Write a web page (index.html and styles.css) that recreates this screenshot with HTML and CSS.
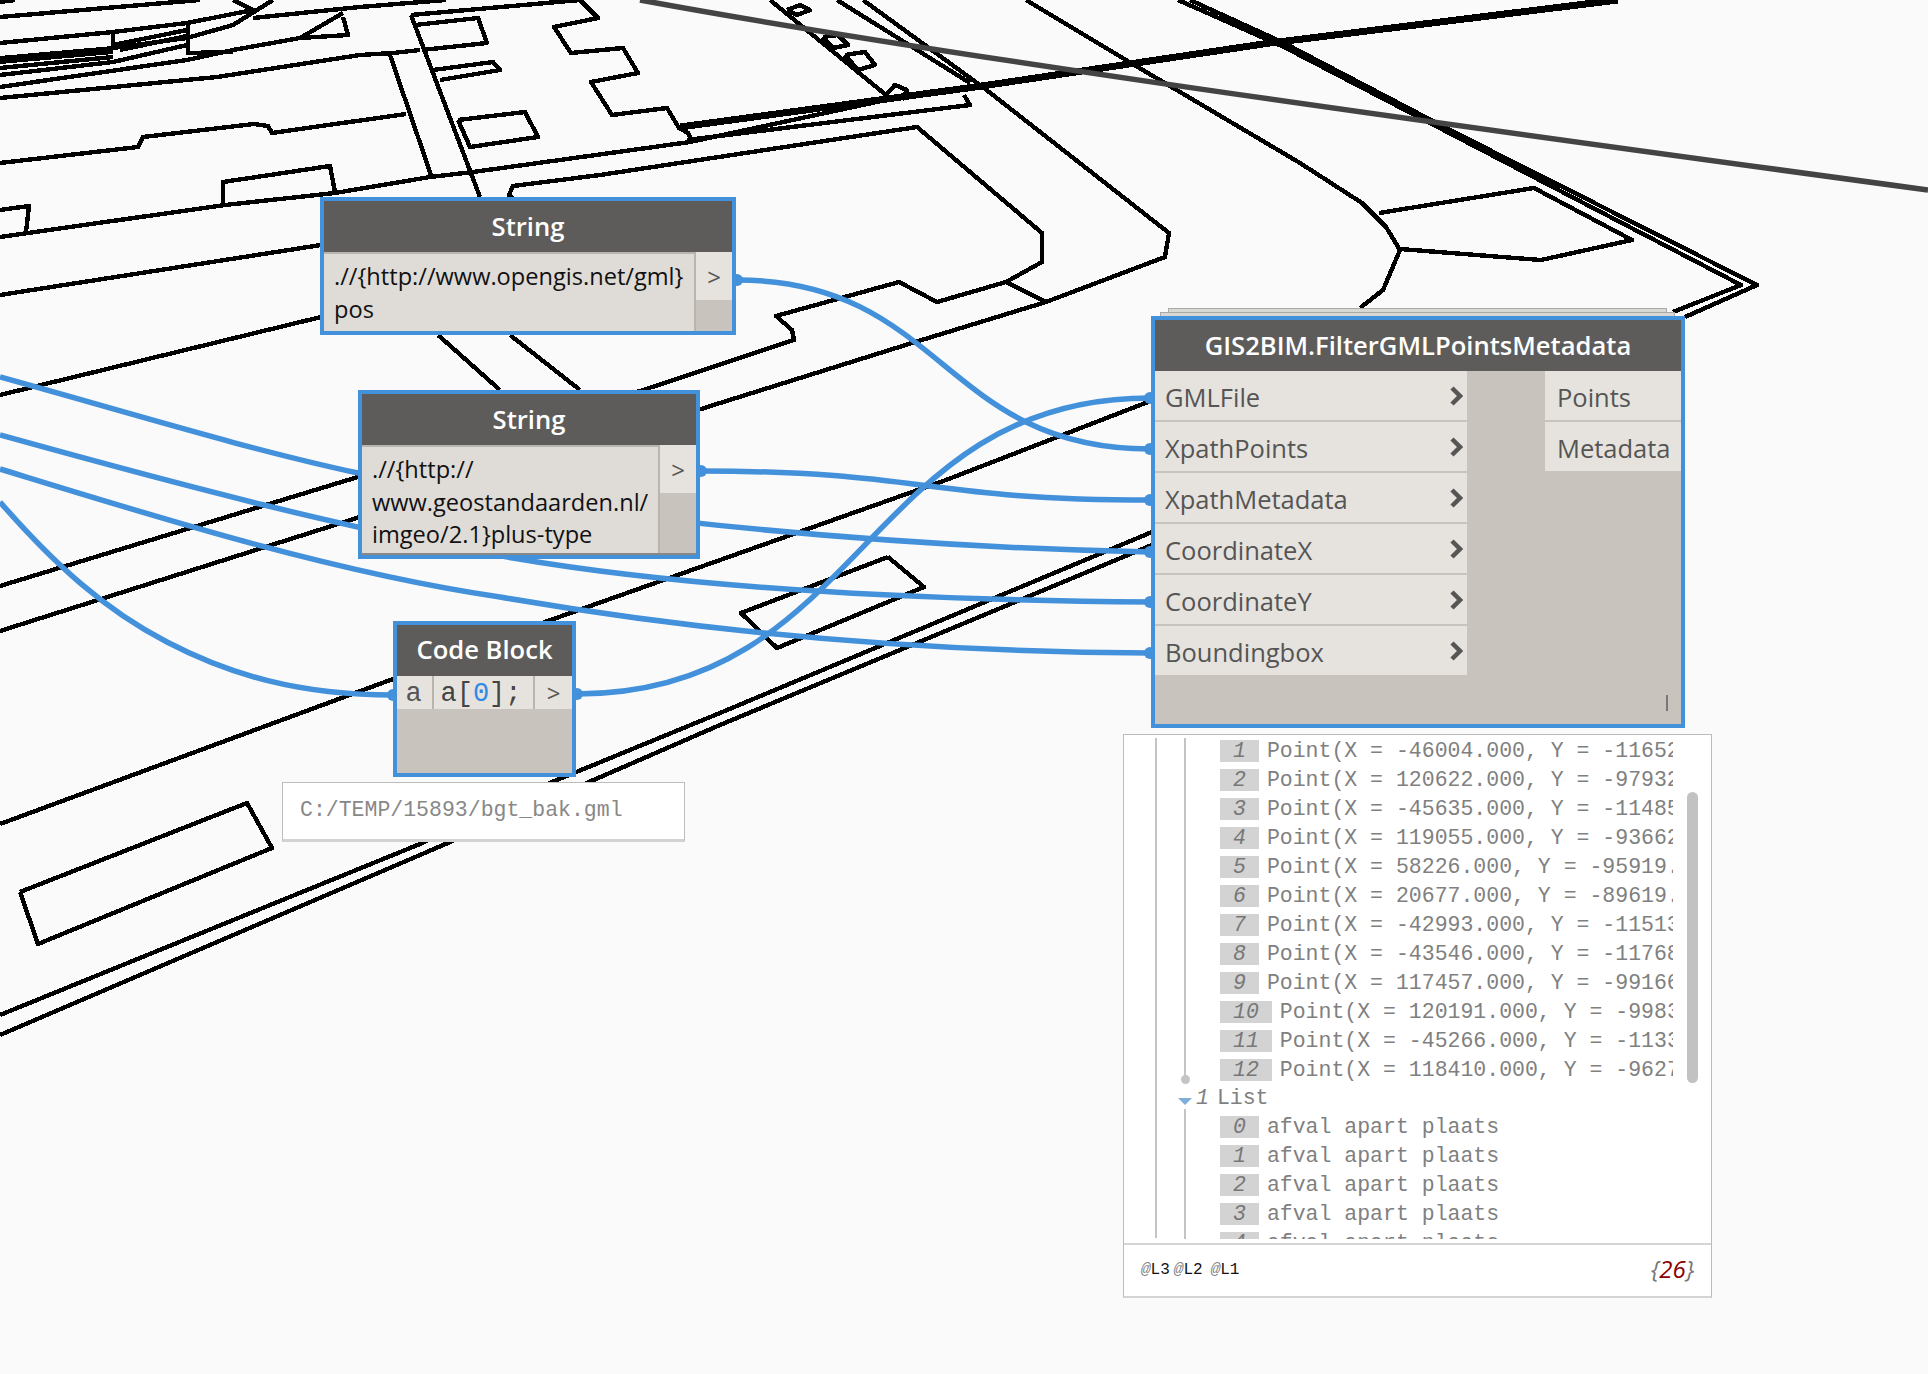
FILE: index.html
```html
<!DOCTYPE html>
<html lang="en">
<head>
<meta charset="utf-8">
<title>GIS2BIM graph</title>
<link rel="stylesheet" href="styles.css">
</head>
<body>
<main class="canvas">
  <svg class="layer" width="1928" height="1374" viewBox="0 0 1928 1374">
    <g class="cad">
      <path d="M0,237 225,205 335,193 430,177 473,172 690,142 886,100 966,88"/>
      <path d="M0,163 138,147 143,137 254,124 268,126 272,133 406,114"/>
      <path d="M223,205 223,182 330,166 335,192"/>
      <path d="M0,210 29,206 26,232"/>
      <path d="M0,295 321,245"/>
      <path d="M0,395 321,317"/>
      <path d="M0,586 640,391 794,340 792,330 776,316 899,282 937,302 1006,282 1042,262 1042,233 917,127 600,175 513,186 509,195 513,198"/>
      <path d="M0,631 720,403 912,343 1046,302 1165,257 1169,233 984,88 863,0"/>
      <path d="M1006,282 1046,302"/>
      <path d="M837,0 970,83"/>
      <path d="M770,0 886,95"/>
      <path d="M1026,0 1131,63 1300,163 1362,203 1386,227 1400,250 1383,290 1360,308"/>
      <path d="M1379,213 1534,188 1632,240 1541,260 1502,257 1400,249"/>
      <path d="M0,17 200,0"/>
      <path d="M0,2 15,0"/>
      <path d="M0,43 113,32 187,23 253,10 233,0"/>
      <path d="M0,62 113,48 187,38 233,25 273,0"/>
      <path d="M0,68 113,57"/>
      <path d="M0,75 113,62 187,45"/>
      <path d="M0,87 187,60 233,50 300,38 343,13"/>
      <path d="M0,98 217,77 360,55 393,53 420,50"/>
      <path d="M113,32 113,50"/>
      <path d="M113,45 187,30"/>
      <path d="M120,50 187,36"/>
      <path d="M188,25 188,53 233,52"/>
      <path d="M300,38 348,35 343,17"/>
      <path d="M253,18 360,7 446,0"/>
      <path d="M411,15 580,0"/>
      <path d="M390,55 431,175"/>
      <path d="M411,15 480,197"/>
      <path d="M438,335 500,390"/>
      <path d="M510,335 580,390"/>
      <path d="M415,25 478,18 487,43 422,50"/>
      <path d="M433,70 493,62 500,70 440,80"/>
      <path d="M458,120 525,112 538,137 470,147 458,120"/>
      <path d="M580,0 598,18 554,27 571,53 623,48 638,73 591,82 612,115 667,108 679,128 688,133 692,142"/>
      <path d="M687,140 970,105 964,95"/>
      <path d="M787,10 800,5 810,10 797,15 787,10"/>
      <path d="M823,37 838,35 848,45 833,48 823,37"/>
      <path d="M845,55 865,52 875,65 858,70 845,55"/>
      <path d="M886,95 895,85 907,90 902,100"/>
      <path d="M20,892 247,803 272,848 38,944 20,892"/>
      <path d="M0,824 393,679 545,622 946,480 1148,402"/>
      <path d="M0,1015 420,844 552,782 720,713 1152,532"/>
      <path d="M0,1035 420,855 589,782 720,725 1152,545"/>
      <path d="M888,557 924,587 777,648 741,613 888,557"/>
      <path d="M1284,47 1741,285 1673,312"/>
      <path d="M1190,0 1284,43 1450,130 1757,285 1685,317"/>
      <path d="M1178,0 1284,47"/>
    </g>
    <path class="cad-heavy" d="M680,127 975,87 1270,43 1618,0"/>
    <path class="cad-band" d="M0,60 113,50"/>
    <path class="axis" d="M640,0 C900,48 1300,105 1928,190"/>
    <g class="wire">
      <path d="M737,280 C943,280 943,449 1150,449"/>
      <path d="M701,471 C925,471 925,500 1150,500"/>
      <path d="M0,377 C130,413 250,450 358,473 C490,501 800,545 1150,552"/>
      <path d="M0,435 C180,485 350,530 513,558 C676,586 900,600 1150,602"/>
      <path d="M0,469 C150,515 330,572 500,597 C680,628 900,652 1150,653"/>
      <path d="M0,502 C55,565 105,610 167,642 C230,675 300,695 393,695"/>
      <path d="M577,694 C864,694 864,398 1150,398"/>
    </g>
    <g class="nib">
      <circle cx="737" cy="280" r="6"/>
      <circle cx="701" cy="471" r="6"/>
      <circle cx="393" cy="695" r="6"/>
      <circle cx="577" cy="694" r="6"/>
      <circle cx="1150" cy="398" r="6"/>
      <circle cx="1150" cy="449" r="6"/>
      <circle cx="1150" cy="500" r="6"/>
      <circle cx="1150" cy="552" r="6"/>
      <circle cx="1150" cy="602" r="6"/>
      <circle cx="1150" cy="653" r="6"/>
    </g>
  </svg>

  <section class="node node-str-a">
    <h2 class="node-head">String</h2>
    <div class="str-body">
      <div class="str-text">.//{http://www.opengis.net/gml}<br>pos</div>
      <div class="str-side"><span class="str-port">&gt;</span></div>
    </div>
  </section>

  <section class="node node-str-b">
    <h2 class="node-head">String</h2>
    <div class="str-body">
      <div class="str-text">.//{http://<br>www.geostandaarden.nl/<br>imgeo/2.1}plus-type</div>
      <div class="str-side"><span class="str-port">&gt;</span></div>
    </div>
  </section>

  <section class="node node-code">
    <h2 class="node-head">Code Block</h2>
    <div class="code-row">
      <span class="code-in">a</span>
      <span class="code-src">a[<span class="code-num">0</span>];</span>
      <span class="code-out">&gt;</span>
    </div>
  </section>

  <div class="preview-small">C:/TEMP/15893/bgt_bak.gml</div>

  <div class="stack stack-back"></div>
  <div class="stack stack-mid"></div>
  <section class="node node-gis">
    <h2 class="node-head">GIS2BIM.FilterGMLPointsMetadata</h2>
    <div class="gis-body">
      <ul class="ports">
        <li class="port-in">GMLFile<svg class="chev" width="14" height="22" viewBox="0 0 14 22"><path d="M3,3 L11,11 L3,19"/></svg></li>
        <li class="port-in">XpathPoints<svg class="chev" width="14" height="22" viewBox="0 0 14 22"><path d="M3,3 L11,11 L3,19"/></svg></li>
        <li class="port-in">XpathMetadata<svg class="chev" width="14" height="22" viewBox="0 0 14 22"><path d="M3,3 L11,11 L3,19"/></svg></li>
        <li class="port-in">CoordinateX<svg class="chev" width="14" height="22" viewBox="0 0 14 22"><path d="M3,3 L11,11 L3,19"/></svg></li>
        <li class="port-in">CoordinateY<svg class="chev" width="14" height="22" viewBox="0 0 14 22"><path d="M3,3 L11,11 L3,19"/></svg></li>
        <li class="port-in">Boundingbox<svg class="chev" width="14" height="22" viewBox="0 0 14 22"><path d="M3,3 L11,11 L3,19"/></svg></li>
      </ul>
      <ul class="ports ports-out">
        <li class="port-out">Points</li>
        <li class="port-out">Metadata</li>
      </ul>
      <span class="grip"></span>
    </div>
  </section>

  <section class="watch">
    <div class="watch-list">
      <span class="guide guide-a"></span>
      <span class="guide guide-b"></span>
      <span class="guide guide-c"></span>
      <span class="guide-dot"></span>
      <span class="scroll"></span>
      <div class="row"><span class="idx">1</span><span class="val">Point(X = -46004.000, Y = -116523.000, Z = 0.000)</span></div>
      <div class="row"><span class="idx">2</span><span class="val">Point(X = 120622.000, Y = -97932.000, Z = 0.000)</span></div>
      <div class="row"><span class="idx">3</span><span class="val">Point(X = -45635.000, Y = -114855.000, Z = 0.000)</span></div>
      <div class="row"><span class="idx">4</span><span class="val">Point(X = 119055.000, Y = -93662.000, Z = 0.000)</span></div>
      <div class="row"><span class="idx">5</span><span class="val">Point(X = 58226.000, Y = -95919.000, Z = 0.000)</span></div>
      <div class="row"><span class="idx">6</span><span class="val">Point(X = 20677.000, Y = -89619.000, Z = 0.000)</span></div>
      <div class="row"><span class="idx">7</span><span class="val">Point(X = -42993.000, Y = -115133.000, Z = 0.000)</span></div>
      <div class="row"><span class="idx">8</span><span class="val">Point(X = -43546.000, Y = -117688.000, Z = 0.000)</span></div>
      <div class="row"><span class="idx">9</span><span class="val">Point(X = 117457.000, Y = -99166.000, Z = 0.000)</span></div>
      <div class="row"><span class="idx">10</span><span class="val">Point(X = 120191.000, Y = -99832.000, Z = 0.000)</span></div>
      <div class="row"><span class="idx">11</span><span class="val">Point(X = -45266.000, Y = -113321.000, Z = 0.000)</span></div>
      <div class="row"><span class="idx">12</span><span class="val">Point(X = 118410.000, Y = -96272.000, Z = 0.000)</span></div>
      <div class="row row-head"><span class="tri"></span><span class="head-idx">1</span><span class="head-name">List</span></div>
      <div class="row"><span class="idx">0</span><span class="val">afval apart plaats</span></div>
      <div class="row"><span class="idx">1</span><span class="val">afval apart plaats</span></div>
      <div class="row"><span class="idx">2</span><span class="val">afval apart plaats</span></div>
      <div class="row"><span class="idx">3</span><span class="val">afval apart plaats</span></div>
      <div class="row"><span class="idx">4</span><span class="val">afval apart plaats</span></div>
    </div>
    <footer class="watch-foot">
      <div class="levels">
        <span class="lvl"><i>@</i>L3</span>
        <span class="lvl"><i>@</i>L2</span>
        <span class="lvl lvl-last"><i>@</i>L1</span>
      </div>
      <span class="count">{<b>26</b>}</span>
    </footer>
  </section>
</main>
</body>
</html>
```
FILE: styles.css
```css
* { box-sizing: border-box; }
html, body { margin: 0; padding: 0; background: #fafafa; }
.canvas {
  position: relative;
  width: 1928px;
  height: 1374px;
  overflow: hidden;
  background: #fafafa;
  font-family: "Open Sans", "Liberation Sans", sans-serif;
}
.layer { position: absolute; left: 0; top: 0; }
.cad path { fill: none; stroke: #000; stroke-width: 4.4; stroke-linejoin: round; shape-rendering: crispEdges; }
.cad-heavy { fill: none; stroke: #000; stroke-width: 7; shape-rendering: crispEdges; }
.cad-band { fill: none; stroke: #000; stroke-width: 8; shape-rendering: crispEdges; }
.axis { fill: none; stroke: #444; stroke-width: 5.5; }
.wire path { fill: none; stroke: #4390db; stroke-width: 5.5; }
.nib circle { fill: #4390db; }

.node { position: absolute; border: 4px solid #4390db; background: #c8c4bd; display: flex; flex-direction: column; }
.node-head {
  margin: 0;
  height: 51px;
  flex: none;
  display: flex;
  align-items: center;
  justify-content: center;
  background: #5e5c5a;
  color: #fff;
  font-size: 25.6px;
  font-weight: 600;
  white-space: nowrap;
}
.node-str-a { left: 320px; top: 197px; width: 416px; height: 138px; }
.node-str-b { left: 358px; top: 390px; width: 342px; height: 169px; }
.node-str-b .str-body { border-bottom: 2px solid #8a8886; }
.node-code { left: 393px; top: 621px; width: 183px; height: 156px; }
.node-code .node-head { padding-bottom: 2px; }
.node-gis { left: 1151px; top: 316px; width: 534px; height: 412px; }

.str-body { flex: 1; display: flex; min-height: 0; }
.str-text {
  flex: 1;
  background: #dfdcd7;
  border-top: 2px solid #b8b4ae;
  border-right: 2px solid #b8b4ae;
  padding: 6px 0 0 10px;
  color: #111;
  font-size: 23.6px;
  line-height: 32.5px;
  white-space: nowrap;
}
.str-side { width: 36px; flex: none; }
.str-port {
  display: flex;
  align-items: center;
  justify-content: center;
  height: 48px;
  background: #e6e3de;
  color: #555;
  font-size: 24px;
}

.code-row { display: flex; height: 33px; background: #e6e3de; color: #555; font-family: "Liberation Mono", monospace; font-size: 27px; line-height: 37px; overflow: hidden; }
.code-in { width: 37px; flex: none; padding-right: 2px; text-align: center; border-right: 2px solid #b8b4ae; }
.code-src { flex: 1; padding-right: 5px; text-align: center; border-right: 2px solid #b8b4ae; color: #444; white-space: nowrap; }
.code-num { color: #2e8ae6; }
.code-out { width: 37px; flex: none; text-align: center; font-family: "Open Sans", sans-serif; font-size: 24px; line-height: 33px; }

.preview-small {
  position: absolute;
  left: 282px;
  top: 782px;
  width: 403px;
  height: 60px;
  padding: 0 0 2px 17px;
  display: flex;
  align-items: center;
  background: #fff;
  border: 1px solid #bdbdbd;
  border-bottom: 3px solid #d2d2d2;
  color: #888;
  font-family: "Liberation Mono", monospace;
  font-size: 21.5px;
}

.stack { position: absolute; background: #d9d7d2; border: 1px solid #aaa; border-bottom: 0; }
.stack-back { left: 1168px; top: 308px; width: 499px; height: 10px; }
.stack-mid { left: 1160px; top: 312px; width: 515px; height: 10px; }

.gis-body { position: relative; flex: 1; display: flex; justify-content: space-between; }
.ports { list-style: none; margin: 0; padding: 0; width: 312px; display: flex; flex-direction: column; gap: 2px; }
.ports-out { width: 136px; }
.port-in, .port-out {
  height: 49px;
  display: flex;
  align-items: center;
  padding-top: 2px;
  background: #e6e3de;
  color: #555;
  font-size: 25.5px;
}
.port-in { justify-content: space-between; padding-left: 10px; padding-right: 4px; }
.port-out { padding-left: 12px; }
.chev { flex: none; margin-top: -1px; }
.chev path { fill: none; stroke: #555; stroke-width: 4.5; }
.grip { position: absolute; right: 13px; bottom: 13px; width: 2px; height: 16px; background: #777; }

.watch {
  position: absolute;
  left: 1123px;
  top: 734px;
  width: 589px;
  height: 564px;
  display: flex;
  flex-direction: column;
  background: #fff;
  border: 1px solid #bbb;
  border-bottom: 2px solid #d4d4d4;
}
.watch-list { position: relative; height: 504px; margin-bottom: 4px; padding-top: 1px; overflow: hidden; flex: none; }
.guide { position: absolute; width: 2px; background: #c4c4c4; }
.guide-a { left: 31px; top: 3px; height: 500px; }
.guide-b { left: 60px; top: 3px; height: 342px; }
.guide-c { left: 60px; top: 374px; height: 130px; }
.guide-dot { position: absolute; left: 57px; top: 340px; width: 9px; height: 9px; border-radius: 50%; background: #c4c4c4; }
.scroll { position: absolute; left: 563px; top: 57px; width: 11px; height: 291px; border-radius: 6px; background: #c2c2c2; }
.row {
  display: flex;
  align-items: center;
  height: 29px;
  margin-left: 96px;
  width: 453px;
  color: #808080;
  font-family: "Liberation Mono", monospace;
  font-size: 21.5px;
  white-space: nowrap;
}
.idx {
  flex: none;
  height: 22px;
  line-height: 22px;
  padding: 0 13px;
  background: #d3d3d3;
  color: #777;
  font-style: italic;
  margin-right: 8px;
}
.val { overflow: hidden; flex: 1; }
.row-head { height: 28px; margin-left: 54px; width: 300px; }
.tri { width: 0; height: 0; border-left: 7px solid transparent; border-right: 7px solid transparent; border-top: 7px solid #7fb0dc; margin-top: 6px; flex: none; margin-right: 4px; }
.head-idx { font-style: italic; margin-right: 8px; }

.watch-foot { flex: 1; display: flex; align-items: center; justify-content: space-between; padding: 0 17px 2px 17px; border-top: 2px solid #d4d4d4; background: #fff; }
.levels { display: flex; }
.lvl { color: #111; font-family: "Liberation Mono", monospace; font-size: 16px; margin-right: 4px; }
.lvl-last { margin-left: 4px; }
.lvl i { color: #888; }
.count { color: #777; font-size: 24px; font-style: italic; margin-bottom: 2px; }
.count b { color: #8b0000; font-weight: 400; }
```
